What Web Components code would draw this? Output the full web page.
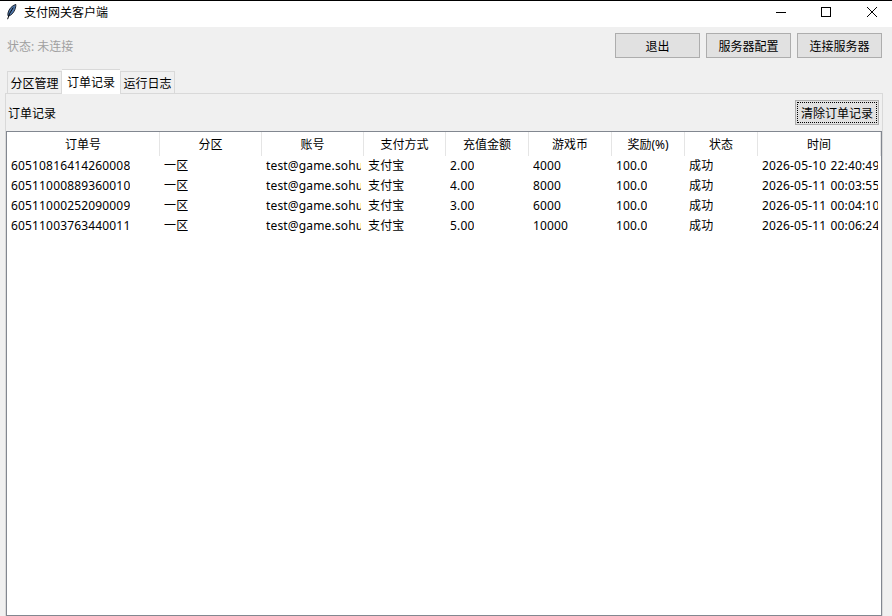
<!DOCTYPE html>
<html lang="zh">
<head>
<meta charset="utf-8">
<title>支付网关客户端</title>
<style>
  html, body { margin: 0; height: 100%; overflow: hidden; background: #f0f0f0; }
  body { font: 12px "Noto Sans", "Noto Sans CJK SC", sans-serif; color: #000; }
</style>
</head>
<body>
<client-window></client-window>

<script>
const FONT = '"Noto Sans", "Noto Sans CJK SC", sans-serif';

class TitleBar extends HTMLElement {
  constructor() {
    super();
    this.attachShadow({ mode: "open" });
    this.shadowRoot.innerHTML = `
      <style>
        :host {
          display: flex;
          align-items: center;
          box-sizing: border-box;
          height: 27px;
          padding-bottom: 5px;
          border-top: 1px solid #000;
          background: #fff;
          font: 12px ${FONT};
        }
        .icon { width: 16px; height: 16px; margin-left: 4px; }
        .name { margin-left: 4px; flex: 1; }
        .ctls { display: flex; margin-right: -3px; }
        .ctl { width: 46px; height: 21px; display: flex; align-items: center; justify-content: center; }
        .min svg { margin-left: 2px; }
      </style>
      <svg class="icon" viewBox="0 0 16 16">
        <path d="M11.8.4C8 1.5 4.8 5 4 9c-.3 1.5-.1 2.6.3 3.2 2.6-.6 5.4-3.4 6.6-6.6.7-1.9 1.1-3.8.9-5.2Z" fill="#4f78ac" stroke="#0d1420" stroke-width=".9"/>
        <path d="M9.2 3.6 5.6 9.6 3.6 15.2" fill="none" stroke="#05070c" stroke-width="1"/>
      </svg>
      <span class="name"><slot></slot></span>
      <span class="ctls">
        <span class="ctl min"><svg width="12" height="12" viewBox="0 0 12 12"><path d="M1 6.5H11" stroke="#000"/></svg></span>
        <span class="ctl"><svg width="12" height="12" viewBox="0 0 12 12"><rect x="1.5" y="1.5" width="9" height="9" fill="none" stroke="#000"/></svg></span>
        <span class="ctl"><svg width="12" height="12" viewBox="0 0 12 12"><path d="M1 1 11 11M11 1 1 11" stroke="#000" fill="none"/></svg></span>
      </span>
    `;
  }
}

class TkButton extends HTMLElement {
  constructor() {
    super();
    this.attachShadow({ mode: "open" });
    this.shadowRoot.innerHTML = `
      <style>
        :host {
          display: flex;
          align-items: center;
          justify-content: center;
          box-sizing: border-box;
          width: 85px;
          height: 25px;
          background: #e1e1e1;
          border: 1px solid #adadad;
          font: 12px ${FONT};
          color: #000;
        }
        :host([focused]) {
          width: 84px;
          outline: 1px dotted #000;
          outline-offset: -3px;
        }
      </style>
      <slot></slot>
    `;
  }
}

class TabBar extends HTMLElement {
  constructor() {
    super();
    this.attachShadow({ mode: "open" });
    this.shadowRoot.innerHTML = `
      <style>
        :host {
          display: flex;
          align-items: flex-end;
          position: relative;
          z-index: 1;
          height: 24px;
          padding-left: 7px;
          font: 12px ${FONT};
        }
        span {
          box-sizing: border-box;
          height: 22px;
          width: 55px;
          display: flex;
          align-items: center;
          justify-content: center;
          border: 1px solid #d9d9d9;
          border-bottom: none;
        }
        .active {
          height: 25px;
          width: 58px;
          background: #fff;
          padding-bottom: 1px;
          margin-bottom: -1px;
          border-left: none;
          border-right: none;
          border-top: 1px solid #d9d9d9;
        }
        span:last-child { border-left: 1px solid #d9d9d9; }
      </style>
      <span>分区管理</span>
      <span class="active">订单记录</span>
      <span>运行日志</span>
    `;
  }
}

class OrderTable extends HTMLElement {
  constructor() {
    super();
    this.attachShadow({ mode: "open" });
    const cols = [153, 102, 102, 82, 83, 83, 73, 73, 123];
    const head = ["订单号", "分区", "账号", "支付方式", "充值金额", "游戏币", "奖励(%)", "状态", "时间"];
    const rows = [
      ["60510816414260008", "一区", "test@game.sohu", "支付宝", "2.00", "4000", "100.0", "成功", "2026-05-10 22:40:49"],
      ["60511000889360010", "一区", "test@game.sohu", "支付宝", "4.00", "8000", "100.0", "成功", "2026-05-11 00:03:55"],
      ["60511000252090009", "一区", "test@game.sohu", "支付宝", "3.00", "6000", "100.0", "成功", "2026-05-11 00:04:10"],
      ["60511003763440011", "一区", "test@game.sohu", "支付宝", "5.00", "10000", "100.0", "成功", "2026-05-11 00:06:24"],
    ];
    const headHtml = head.map(t => `<div class="th">${t}</div>`).join("");
    const rowHtml = rows.map(r => r.map(t => `<div class="td"><span>${t}</span></div>`).join("")).join("");
    this.shadowRoot.innerHTML = `
      <style>
        :host {
          display: block;
          box-sizing: border-box;
          background: #fff;
          border: 1px solid #828790;
          font: 12px ${FONT};
        }
        .grid {
          display: grid;
          grid-template-columns: ${cols.map(c => c + "px").join(" ")};
          grid-template-rows: 24px;
          grid-auto-rows: 20px;
        }
        .th {
          display: flex;
          align-items: center;
          justify-content: center;
          padding-bottom: 1px;
          border-right: 1px solid #e5e5e5;
          box-sizing: border-box;
        }
        .td {
          display: flex;
          align-items: center;
          padding: 0 3px 2px 4px;
          overflow: hidden;
          white-space: nowrap;
          letter-spacing: .16px;
          word-spacing: 1px;
        }
        .td span { display: block; overflow: hidden; }
      </style>
      <div class="grid">${headHtml}${rowHtml}</div>
    `;
  }
}

class ClientWindow extends HTMLElement {
  constructor() {
    super();
    this.attachShadow({ mode: "open" });
    this.shadowRoot.innerHTML = `
      <style>
        :host {
          display: flex;
          flex-direction: column;
          height: 616px;
          overflow: hidden;
          font: 12px ${FONT};
          background: #f0f0f0;
        }
        .top {
          display: flex;
          align-items: center;
          gap: 6px;
          padding: 6px 10px 0 7px;
        }
        .status { flex: 1; color: #a0a0a0; }
        tab-bar { margin-top: 11px; }
        .panel {
          flex: 1;
          min-height: 0;
          display: flex;
          flex-direction: column;
          margin: 0 9px 0 5px;
          border: 1px solid #d9d9d9;
          border-bottom: none;
        }
        .tools {
          display: flex;
          align-items: center;
          justify-content: space-between;
          padding: 6px 3px 6px 2px;
        }
        order-table { flex: 1; min-height: 0; }
      </style>
      <title-bar>支付网关客户端</title-bar>
      <div class="top">
        <span class="status">状态: 未连接</span>
        <tk-button>退出</tk-button>
        <tk-button>服务器配置</tk-button>
        <tk-button>连接服务器</tk-button>
      </div>
      <tab-bar></tab-bar>
      <div class="panel">
        <div class="tools">
          <span>订单记录</span>
          <tk-button focused>清除订单记录</tk-button>
        </div>
        <order-table></order-table>
      </div>
    `;
  }
}

customElements.define("title-bar", TitleBar);
customElements.define("tk-button", TkButton);
customElements.define("tab-bar", TabBar);
customElements.define("order-table", OrderTable);
customElements.define("client-window", ClientWindow);
</script>
</body>
</html>
